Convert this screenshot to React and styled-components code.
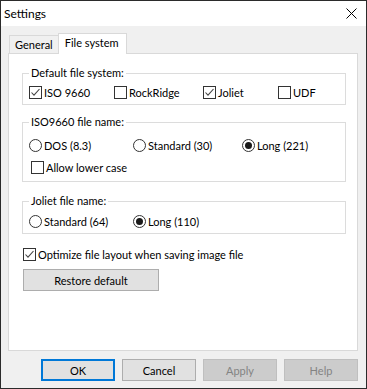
import React from "react";
import styled, { createGlobalStyle } from "styled-components";

const GlobalStyle = createGlobalStyle`
  body {
    margin: 0;
    background: #ffffff;
    font-family: Lato, "Noto Sans", sans-serif;
    font-size: 11px;
    color: #000000;
  }
`;

const CheckIcon = () => (
  <svg width="11" height="11" viewBox="0 0 11 11">
    <polyline points="1.5,5.5 4,8.2 9.5,2" fill="none" stroke="#444" strokeWidth="1.1" />
  </svg>
);

const CloseIcon = () => (
  <svg width="11" height="11" viewBox="0 0 11 11">
    <path d="M0.5 0.5 L10.5 10.5 M10.5 0.5 L0.5 10.5" stroke="#000" strokeWidth="1" />
  </svg>
);

const Checkbox = ({ checked, label, width, indent }) => (
  <Option $width={width} $indent={indent}>
    <Box>{checked ? <CheckIcon /> : null}</Box>
    <span>{label}</span>
  </Option>
);

const Radio = ({ checked, label, width }) => (
  <Option $width={width}>
    <Circle>{checked ? <Dot /> : null}</Circle>
    <span>{label}</span>
  </Option>
);

export default function App() {
  return (
    <>
      <GlobalStyle />
      <Window>
        <TitleBar>
          <Title>Settings</Title>
          <CloseIcon />
        </TitleBar>
        <Body>
          <TabStrip>
            <Tab>General</Tab>
            <Tab $active>File system</Tab>
          </TabStrip>
          <Panel>
            <Group $top={3} $bottom={4}>
              <Legend>Default file system:</Legend>
              <Row>
                <Checkbox checked label="ISO 9660" width={85} />
                <Checkbox label="RockRidge" width={89} />
                <Checkbox checked label="Joliet" width={75} />
                <Checkbox label="UDF" />
              </Row>
            </Group>
            <Group $gap={9} $top={7} $bottom={6}>
              <Legend>ISO9660 file name:</Legend>
              <Row>
                <Radio label="DOS (8.3)" width={104} />
                <Radio label="Standard (30)" width={109} />
                <Radio checked label="Long (221)" />
              </Row>
              <Row>
                <Checkbox label="Allow lower case" indent={2} />
              </Row>
            </Group>
            <Group $gap={11} $top={4} $bottom={4}>
              <Legend>Joliet file name:</Legend>
              <Row>
                <Radio label="Standard (64)" width={104} />
                <Radio checked label="Long (110)" />
              </Row>
            </Group>
            <LooseRow>
              <Checkbox checked label="Optimize file layout when saving image file" />
            </LooseRow>
            <RestoreButton>Restore default</RestoreButton>
          </Panel>
          <ButtonBar>
            <DialogButton $default>OK</DialogButton>
            <DialogButton>Cancel</DialogButton>
            <DialogButton disabled>Apply</DialogButton>
            <DialogButton disabled>Help</DialogButton>
          </ButtonBar>
        </Body>
      </Window>
    </>
  );
}

const Window = styled.div`
  width: 367px;
  height: 389px;
  box-sizing: border-box;
  border: 1px solid #2b2b2b;
  display: flex;
  flex-direction: column;
  background: #f0f0f0;
  overflow: hidden;
`;

const TitleBar = styled.div`
  height: 25px;
  flex: none;
  background: #ffffff;
  display: flex;
  align-items: center;
  justify-content: space-between;
  padding: 0 9px 0 3px;
`;

const Title = styled.span`
  font-size: 12px;
  line-height: 16px;
`;

const Body = styled.div`
  flex: 1;
  display: flex;
  flex-direction: column;
  padding: 7px 8px 0 7px;
`;

const TabStrip = styled.div`
  display: flex;
  align-items: flex-end;
  height: 20px;
  padding-left: 1px;
`;

const Tab = styled.div`
  box-sizing: border-box;
  height: ${(p) => (p.$active ? "21px" : "18px")};
  margin-bottom: ${(p) => (p.$active ? "-1px" : "0")};
  margin-left: ${(p) => (p.$active ? "-1px" : "0")};
  padding: ${(p) => (p.$active ? "0 7px 0 6px" : "0 5px 0 5px")};
  background: ${(p) => (p.$active ? "#ffffff" : "#f0f0f0")};
  border: 1px solid #d9d9d9;
  border-bottom: none;
  line-height: 17px;
  position: relative;
  z-index: ${(p) => (p.$active ? 1 : 0)};
  white-space: nowrap;
`;

const Panel = styled.div`
  box-sizing: border-box;
  height: 298px;
  flex: none;
  background: #ffffff;
  border: 1px solid #d9d9d9;
  padding: 11px 11px 0 13px;
  display: flex;
  flex-direction: column;
`;

const Group = styled.fieldset`
  margin: ${(p) => p.$gap || 0}px 0 0 0;
  border: 1px solid #dcdcdc;
  padding: ${(p) => p.$top}px 6px ${(p) => p.$bottom}px 6px;
  min-width: 0;
  display: flex;
  flex-direction: column;
  gap: 6px;
`;

const Legend = styled.legend`
  padding: 0 2px;
  line-height: 16px;
`;

const Row = styled.div`
  display: flex;
  align-items: center;
  height: 16px;
`;

const LooseRow = styled(Row)`
  margin: 12px 0 0 1px;
`;

const Option = styled.label`
  display: flex;
  align-items: center;
  gap: 2px;
  height: 16px;
  white-space: nowrap;
  width: ${(p) => (p.$width ? `${p.$width}px` : "auto")};
  margin-left: ${(p) => p.$indent || 0}px;
`;

const Box = styled.span`
  box-sizing: border-box;
  width: 13px;
  height: 13px;
  flex: none;
  border: 1px solid #333333;
  background: #ffffff;
  display: flex;
  align-items: center;
  justify-content: center;
`;

const Circle = styled.span`
  box-sizing: border-box;
  width: 13px;
  height: 13px;
  flex: none;
  border: 1px solid #333333;
  border-radius: 50%;
  background: #ffffff;
  display: flex;
  align-items: center;
  justify-content: center;
`;

const Dot = styled.span`
  width: 7px;
  height: 7px;
  border-radius: 50%;
  background: #1a1a1a;
`;

const ButtonBase = styled.button`
  box-sizing: border-box;
  height: 22px;
  font-family: inherit;
  font-size: 11px;
  color: #000000;
  background: #e1e1e1;
  border: 1px solid #adadad;
  padding: 0;
`;

const RestoreButton = styled(ButtonBase)`
  width: 136px;
  margin: 7px 0 0 1px;
`;

const ButtonBar = styled.div`
  display: flex;
  justify-content: flex-end;
  gap: 7px;
  margin-top: 8px;
`;

const DialogButton = styled(ButtonBase)`
  width: 74px;
  border: ${(p) => (p.$default ? "2px solid #0078d7" : "1px solid #adadad")};

  &:disabled {
    background: #cccccc;
    border-color: #bfbfbf;
    color: #838383;
  }
`;
